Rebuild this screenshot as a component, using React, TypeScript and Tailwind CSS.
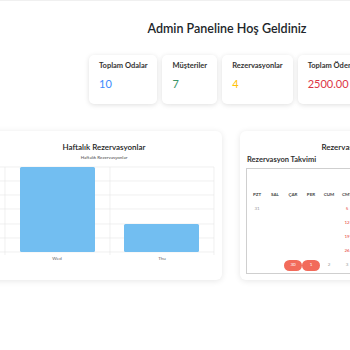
import React from 'react'

const font = { fontFamily: 'Lato, "Noto Sans", sans-serif' }

const stats = [
  { label: 'Toplam Odalar', value: '10', color: 'text-[#3d8bfd]' },
  { label: 'Müşteriler', value: '7', color: 'text-[#3a9467]' },
  { label: 'Rezervasyonlar', value: '4', color: 'text-[#ffc107]' },
  { label: 'Toplam Ödemeler', value: '2500.00 ₺', color: 'text-[#dc3545]' },
]

const days = ['PZT', 'SAL', 'ÇAR', 'PER', 'CUM', 'CMT', 'PAZ']

// only the cells that show something; weekday dates of the month stay blank
type Cell = { t: string; kind?: 'muted' | 'red' | 'event' }
const weeks: Cell[][] = [
  [{ t: '31', kind: 'muted' }, { t: '' }, { t: '' }, { t: '' }, { t: '' }, { t: '5', kind: 'red' }, { t: '6', kind: 'red' }],
  [{ t: '' }, { t: '' }, { t: '' }, { t: '' }, { t: '' }, { t: '12', kind: 'red' }, { t: '13', kind: 'red' }],
  [{ t: '' }, { t: '' }, { t: '' }, { t: '' }, { t: '' }, { t: '19', kind: 'red' }, { t: '20', kind: 'red' }],
  [{ t: '' }, { t: '' }, { t: '' }, { t: '' }, { t: '' }, { t: '26', kind: 'red' }, { t: '27', kind: 'red' }],
  [{ t: '' }, { t: '' }, { t: '30', kind: 'event' }, { t: '1', kind: 'event' }, { t: '2', kind: 'muted' }, { t: '3', kind: 'muted' }, { t: '4', kind: 'muted' }],
]

function BarChart() {
  const grid = [14, 28, 42, 56, 71, 85, 99]
  const ticks = ['3.0', '2.5', '2.0', '1.5', '1.0', '0.5', '0']
  return (
    <svg width="236" height="112" viewBox="0 0 236 112" className="block">
      <text x="118" y="6" textAnchor="middle" fontSize="4.5" fill="#666" fontWeight="600">Haftalık Rezervasyonlar</text>
      {grid.map((y, i) => (
        <g key={y}>
          <line x1="14" x2="228" y1={y} y2={y} stroke="#e6e6e6" strokeWidth="0.6" />
          <text x="12" y={y + 1.8} textAnchor="end" fontSize="4.5" fill="#666">{ticks[i]}</text>
        </g>
      ))}
      {[19, 124, 228].map((x) => (
        <line key={x} x1={x} x2={x} y1="14" y2="102" stroke="#e6e6e6" strokeWidth="0.6" />
      ))}
      <rect x="34" y="14" width="75" height="85" rx="1.5" fill="#72bef1" />
      <rect x="138" y="71" width="75" height="28" rx="1.5" fill="#72bef1" />
      <text x="71" y="107" textAnchor="middle" fontSize="4.5" fill="#666">Wed</text>
      <text x="176" y="107" textAnchor="middle" fontSize="4.5" fill="#666">Thu</text>
    </svg>
  )
}

export default function App() {
  return (
    <div className="w-[350px] h-[350px] overflow-hidden bg-white border-t border-[#f0f0f0]" style={font}>
      <div className="ml-[-14px] w-[490px] pt-[19px]">
        <h1 className="text-center text-[12.5px] font-semibold leading-[18px] text-[#212529] pr-[8px]">
          Admin Paneline Hoş Geldiniz
        </h1>

        <div className="mt-[17px] flex gap-[5px] pl-[103px]">
          {stats.map((s) => (
            <div
              key={s.label}
              className="h-[49px] rounded-[5px] bg-white px-[10px] pt-[6px] shadow-[0_1px_5px_rgba(0,0,0,0.13)] shrink-0"
            >
              <div className="text-[7.5px] font-bold leading-[10px] text-[#333] whitespace-nowrap">{s.label}</div>
              <div className={`mt-[6px] text-[11px] leading-[14px] whitespace-nowrap ${s.color}`}>{s.value}</div>
            </div>
          ))}
        </div>

        <div className="mt-[27px] flex gap-[18px]">
          <div className="w-[236px] h-[149px] shrink-0 rounded-[6px] bg-white pt-[10px] shadow-[0_1px_6px_rgba(0,0,0,0.1)]">
            <div className="text-center text-[8px] font-semibold leading-[12px] text-[#222]">Haftalık Rezervasyonlar</div>
            <BarChart />
          </div>

          <div className="w-[236px] h-[149px] shrink-0 rounded-[6px] bg-white px-[6px] pt-[10px] shadow-[0_1px_6px_rgba(0,0,0,0.1)]">
            <div className="text-center text-[8px] font-semibold leading-[12px] text-[#222]">Rezervasyon Takvimi</div>
            <div className="mt-[1px] pl-[1px] text-[7.5px] font-bold leading-[12px] text-[#333]">Rezervasyon Takvimi</div>
            <div className="mt-[2px] h-[106px] border border-[#cfcfcf] pt-[19px] pl-[1px]">
              <div className="grid grid-cols-[repeat(7,18px)]">
                {days.map((d) => (
                  <div key={d} className="h-[14px] flex items-center justify-center text-[4.5px] font-bold text-[#444]">
                    {d}
                  </div>
                ))}
                {weeks.flat().map((c, i) => (
                  <div key={i} className="h-[14px] flex items-center justify-center text-[4.5px]">
                    {c.kind === 'event' ? (
                      <span className="w-[18px] h-[11px] rounded-full bg-[#f26b5b] text-white flex items-center justify-center">
                        {c.t}
                      </span>
                    ) : (
                      <span className={c.kind === 'red' ? 'text-[#e53935]' : 'text-[#999]'}>{c.t}</span>
                    )}
                  </div>
                ))}
              </div>
            </div>
          </div>
        </div>
      </div>
    </div>
  )
}
